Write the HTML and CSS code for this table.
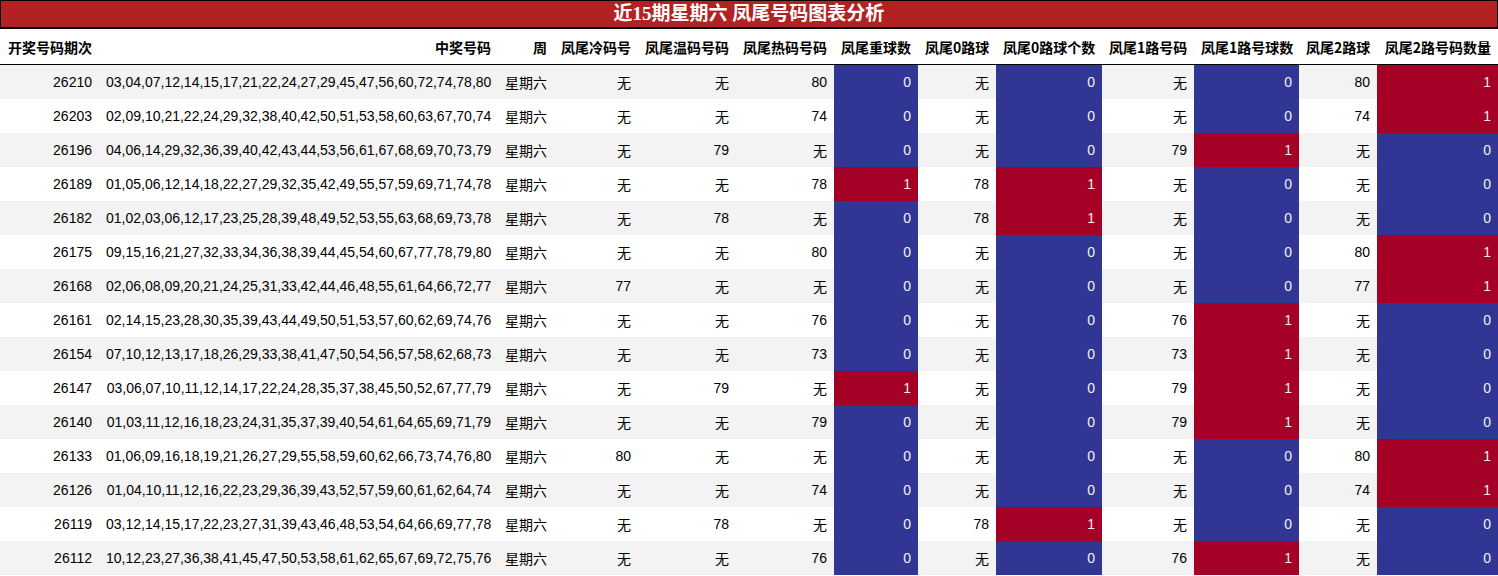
FILE: index.html
```html
<!DOCTYPE html>
<html lang="zh">
<head>
<meta charset="utf-8">
<title>近15期星期六 凤尾号码图表分析</title>
<link rel="stylesheet" href="styles.css">
</head>
<body>
<div class="title">近15期星期六 凤尾号码图表分析</div>
<table class="grid">
<colgroup>
<col class="c-qi"><col class="c-nums"><col class="c-week"><col class="c-cold"><col class="c-warm"><col class="c-hot"><col class="c-rep"><col class="c-r0"><col class="c-r0n"><col class="c-r1"><col class="c-r1n"><col class="c-r2"><col class="c-r2n">
</colgroup>
<thead>
<tr><th>开奖号码期次</th><th>中奖号码</th><th>周</th><th>凤尾冷码号</th><th>凤尾温码号码</th><th>凤尾热码号码</th><th>凤尾重球数</th><th>凤尾0路球</th><th>凤尾0路球个数</th><th>凤尾1路号码</th><th>凤尾1路号球数</th><th>凤尾2路球</th><th>凤尾2路号码数量</th></tr>
</thead>
<tbody>
<tr><td>26210</td><td>03,04,07,12,14,15,17,21,22,24,27,29,45,47,56,60,72,74,78,80</td><td>星期六</td><td>无</td><td>无</td><td>80</td><td class="lo">0</td><td>无</td><td class="lo">0</td><td>无</td><td class="lo">0</td><td>80</td><td class="hi">1</td></tr>
<tr><td>26203</td><td>02,09,10,21,22,24,29,32,38,40,42,50,51,53,58,60,63,67,70,74</td><td>星期六</td><td>无</td><td>无</td><td>74</td><td class="lo">0</td><td>无</td><td class="lo">0</td><td>无</td><td class="lo">0</td><td>74</td><td class="hi">1</td></tr>
<tr><td>26196</td><td>04,06,14,29,32,36,39,40,42,43,44,53,56,61,67,68,69,70,73,79</td><td>星期六</td><td>无</td><td>79</td><td>无</td><td class="lo">0</td><td>无</td><td class="lo">0</td><td>79</td><td class="hi">1</td><td>无</td><td class="lo">0</td></tr>
<tr><td>26189</td><td>01,05,06,12,14,18,22,27,29,32,35,42,49,55,57,59,69,71,74,78</td><td>星期六</td><td>无</td><td>无</td><td>78</td><td class="hi">1</td><td>78</td><td class="hi">1</td><td>无</td><td class="lo">0</td><td>无</td><td class="lo">0</td></tr>
<tr><td>26182</td><td>01,02,03,06,12,17,23,25,28,39,48,49,52,53,55,63,68,69,73,78</td><td>星期六</td><td>无</td><td>78</td><td>无</td><td class="lo">0</td><td>78</td><td class="hi">1</td><td>无</td><td class="lo">0</td><td>无</td><td class="lo">0</td></tr>
<tr><td>26175</td><td>09,15,16,21,27,32,33,34,36,38,39,44,45,54,60,67,77,78,79,80</td><td>星期六</td><td>无</td><td>无</td><td>80</td><td class="lo">0</td><td>无</td><td class="lo">0</td><td>无</td><td class="lo">0</td><td>80</td><td class="hi">1</td></tr>
<tr><td>26168</td><td>02,06,08,09,20,21,24,25,31,33,42,44,46,48,55,61,64,66,72,77</td><td>星期六</td><td>77</td><td>无</td><td>无</td><td class="lo">0</td><td>无</td><td class="lo">0</td><td>无</td><td class="lo">0</td><td>77</td><td class="hi">1</td></tr>
<tr><td>26161</td><td>02,14,15,23,28,30,35,39,43,44,49,50,51,53,57,60,62,69,74,76</td><td>星期六</td><td>无</td><td>无</td><td>76</td><td class="lo">0</td><td>无</td><td class="lo">0</td><td>76</td><td class="hi">1</td><td>无</td><td class="lo">0</td></tr>
<tr><td>26154</td><td>07,10,12,13,17,18,26,29,33,38,41,47,50,54,56,57,58,62,68,73</td><td>星期六</td><td>无</td><td>无</td><td>73</td><td class="lo">0</td><td>无</td><td class="lo">0</td><td>73</td><td class="hi">1</td><td>无</td><td class="lo">0</td></tr>
<tr><td>26147</td><td>03,06,07,10,11,12,14,17,22,24,28,35,37,38,45,50,52,67,77,79</td><td>星期六</td><td>无</td><td>79</td><td>无</td><td class="hi">1</td><td>无</td><td class="lo">0</td><td>79</td><td class="hi">1</td><td>无</td><td class="lo">0</td></tr>
<tr><td>26140</td><td>01,03,11,12,16,18,23,24,31,35,37,39,40,54,61,64,65,69,71,79</td><td>星期六</td><td>无</td><td>无</td><td>79</td><td class="lo">0</td><td>无</td><td class="lo">0</td><td>79</td><td class="hi">1</td><td>无</td><td class="lo">0</td></tr>
<tr><td>26133</td><td>01,06,09,16,18,19,21,26,27,29,55,58,59,60,62,66,73,74,76,80</td><td>星期六</td><td>80</td><td>无</td><td>无</td><td class="lo">0</td><td>无</td><td class="lo">0</td><td>无</td><td class="lo">0</td><td>80</td><td class="hi">1</td></tr>
<tr><td>26126</td><td>01,04,10,11,12,16,22,23,29,36,39,43,52,57,59,60,61,62,64,74</td><td>星期六</td><td>无</td><td>无</td><td>74</td><td class="lo">0</td><td>无</td><td class="lo">0</td><td>无</td><td class="lo">0</td><td>74</td><td class="hi">1</td></tr>
<tr><td>26119</td><td>03,12,14,15,17,22,23,27,31,39,43,46,48,53,54,64,66,69,77,78</td><td>星期六</td><td>无</td><td>78</td><td>无</td><td class="lo">0</td><td>78</td><td class="hi">1</td><td>无</td><td class="lo">0</td><td>无</td><td class="lo">0</td></tr>
<tr><td>26112</td><td>10,12,23,27,36,38,41,45,47,50,53,58,61,62,65,67,69,72,75,76</td><td>星期六</td><td>无</td><td>无</td><td>76</td><td class="lo">0</td><td>无</td><td class="lo">0</td><td>76</td><td class="hi">1</td><td>无</td><td class="lo">0</td></tr>
</tbody>
</table>
</body>
</html>
```
FILE: styles.css
```css
html, body {
  margin: 0;
  padding: 0;
  background: #fff;
}

body {
  font-family: "Liberation Sans", "Noto Sans CJK SC", sans-serif;
  font-size: 14px;
  color: #000;
}

.title {
  height: 26px;
  line-height: 26px;
  border: 1px solid #000;
  border-bottom-width: 2px;
  background: #b22222;
  color: #fff;
  text-align: center;
  font-family: "Liberation Serif", "Noto Sans CJK SC", serif;
  font-weight: bold;
  font-size: 19px;
}

.grid {
  width: 1498px;
  table-layout: fixed;
  border-collapse: collapse;
  border-spacing: 0;
}

.c-qi { width: 99px; }
.c-nums { width: 399px; }
.c-week { width: 56px; }
.c-cold { width: 84px; }
.c-warm { width: 98px; }
.c-hot { width: 98px; }
.c-rep { width: 84px; }
.c-r0 { width: 78px; }
.c-r0n { width: 106px; }
.c-r1 { width: 92px; }
.c-r1n { width: 105px; }
.c-r2 { width: 78px; }
.c-r2n { width: 121px; }

.grid th,
.grid td {
  padding: 0 7px;
  text-align: right;
  white-space: nowrap;
  overflow: hidden;
}

.grid th {
  height: 35px;
  font-family: "Noto Sans CJK SC", sans-serif;
  font-weight: bold;
  font-size: 14px;
  border-bottom: 1px solid #000;
  background: #fff;
}

.grid td {
  height: 34px;
}

.grid tbody tr:nth-child(odd) td {
  background: #f3f3f3;
}

.grid tbody tr:nth-child(even) td {
  background: #fff;
}

.grid tbody tr td.lo {
  background: #313695;
  color: #f1f1f1;
}

.grid tbody tr td.hi {
  background: #a50026;
  color: #f1f1f1;
}
```
